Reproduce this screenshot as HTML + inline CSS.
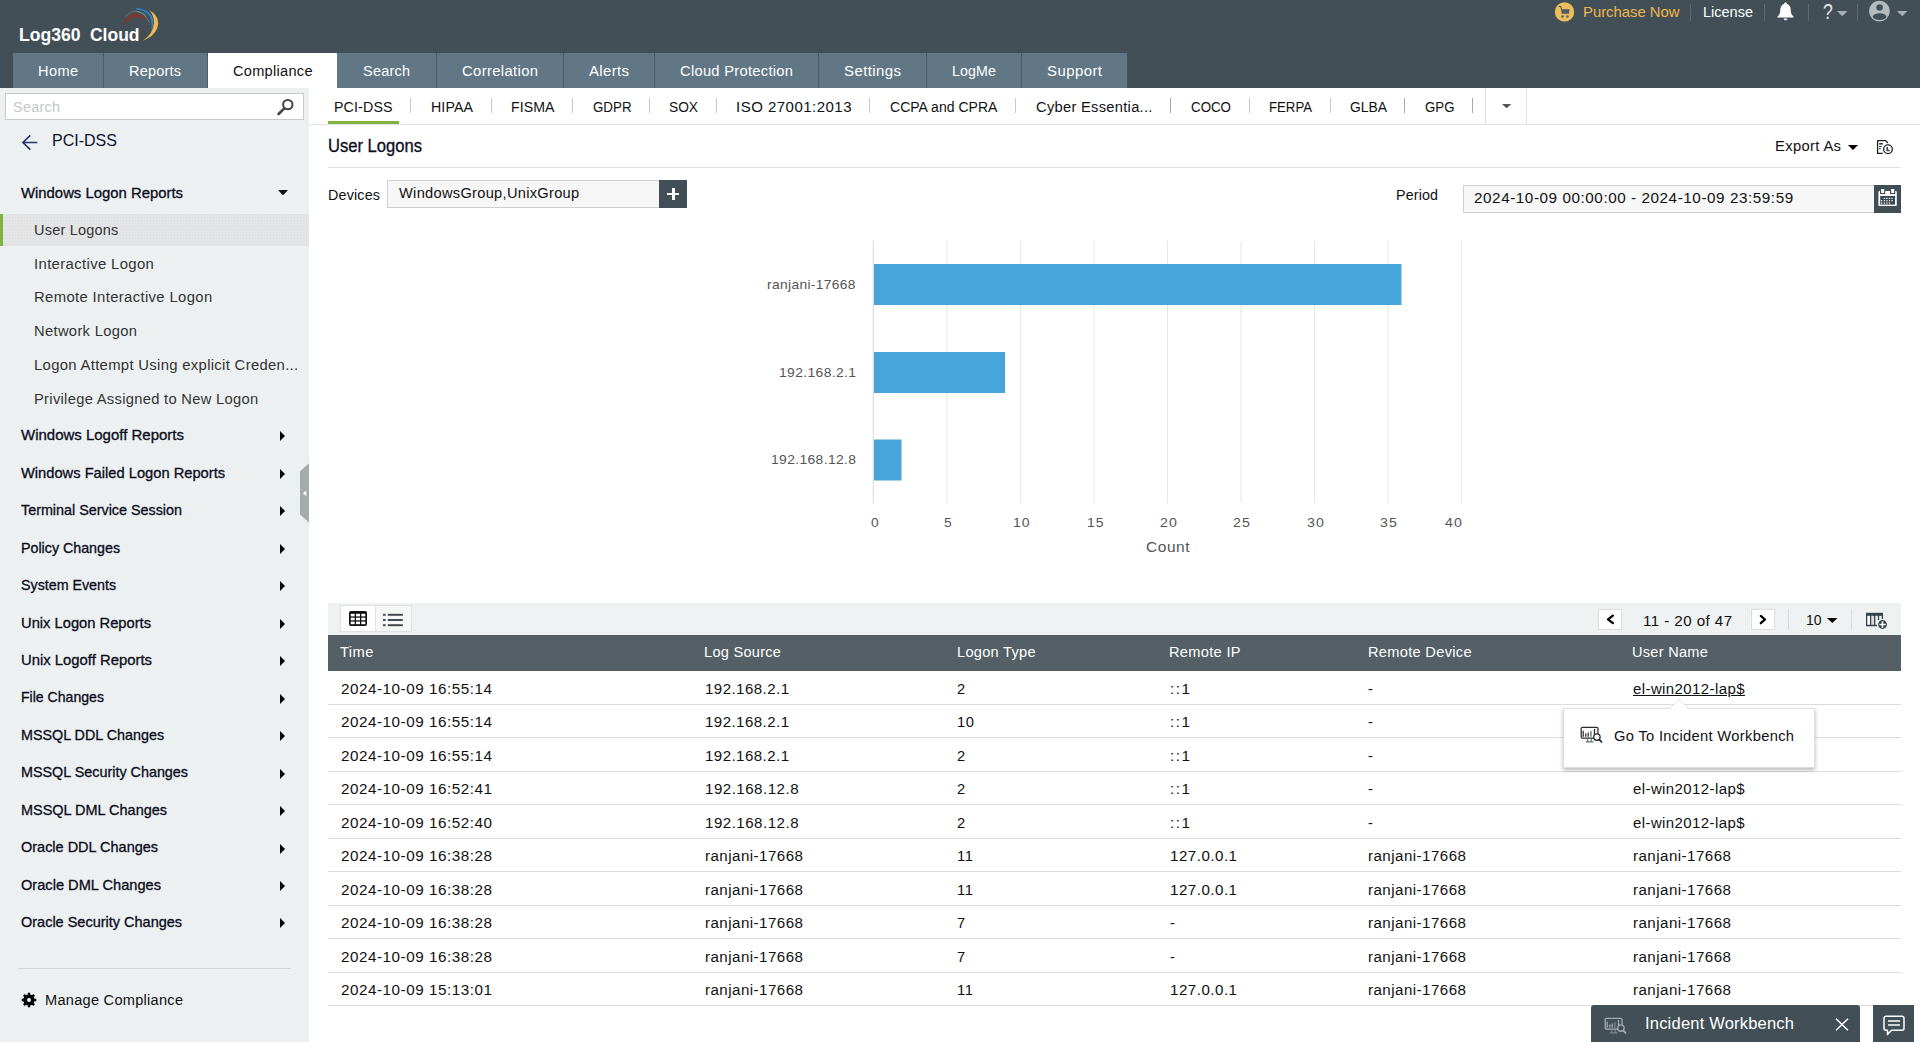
<!DOCTYPE html>
<html><head><meta charset="utf-8"><title>Log360 Cloud</title>
<style>
*{box-sizing:border-box;margin:0;padding:0}
html,body{width:1920px;height:1042px;overflow:hidden;background:#fff}
body{font-family:"Liberation Sans",sans-serif;font-size:14px;color:#222;position:relative}
.a{position:absolute;white-space:pre;line-height:1}
.t{position:absolute;white-space:pre;line-height:16px;height:16px}
/* header */
#hdr{position:absolute;left:0;top:0;width:1920px;height:88px;background:#424f57}
.nt{position:absolute;top:53px;height:35px;background:#627786;color:#fff;font-size:14px;border-right:1px solid #4b5b67}
.nt span{position:absolute;top:10px;line-height:16px;white-space:pre}
.nt.act{background:#fff;color:#111;border-right:none}
.hsep{position:absolute;top:4px;width:1px;height:17px;background:#5d6a72}
/* sidebar */
#side{position:absolute;left:0;top:88px;width:309px;height:954px;background:#ecf0f1}
.mh{position:absolute;left:21px;font-size:15px;font-weight:400;color:#0c0d1c;-webkit-text-stroke:0.32px #0c0d1c;white-space:pre;line-height:18px}
.ms{position:absolute;left:34px;font-size:14px;color:#333;white-space:pre;line-height:16px}
.ar{position:absolute;left:279.800px;width:0;height:0;border-left:5.500px solid #000;border-top:5px solid transparent;border-bottom:5px solid transparent}
/* subtabs */
.st{position:absolute;top:99px;font-size:14px;color:#111;white-space:pre;line-height:16px}
.ss{position:absolute;top:98px;width:1px;height:15px;background:#c9c9c9}
/* table */
.th{position:absolute;top:644px;color:#fff;font-size:14px;white-space:pre;line-height:16px}
.row{position:absolute;left:328px;width:1573px;height:1px;background:#dcdcdc}
.td{position:absolute;font-size:14px;color:#111;white-space:pre;line-height:16px}
</style></head><body>

<!-- ================= HEADER ================= -->
<div id="hdr">
  <span class="a" style="left: 18.5px; top: 26px; font-size: 18px; font-weight: 700; color: rgb(255, 255, 255); transform: scaleX(0.976); transform-origin: 0px 0px;">Log360</span><span class="a" style="left: 89.5px; top: 26px; font-size: 18px; font-weight: 700; color: rgb(255, 255, 255); transform: scaleX(0.971); transform-origin: 0px 0px;">Cloud</span>
  <svg class="a" style="left:116px;top:2px" width="50" height="44" viewBox="116 2 50 44">
    <path d="M123.800 25.200 Q125.800 14 136 13.500 Q143.500 13.800 147.400 21 Q141 17 135 17.200 Q129.500 18 125 24.500Z" fill="#7d392f"></path>
    <path d="M125 16.500 Q130 11.200 136 11 Q144 12 149.500 22.500" fill="none" stroke="#6c7a82" stroke-width="0.900"></path>
    <path d="M136.500 11.400 Q142 12.200 146 16.200" fill="none" stroke="#4aa0d8" stroke-width="1" stroke-dasharray="0.8 0.8"></path>
    <path d="M137.300 11.600 Q142.500 12.600 146.300 16.600" fill="none" stroke="#8cc63f" stroke-width="0.900" stroke-dasharray="0.8 0.8"></path>
    <path d="M136 8 Q146 8.300 151.200 15 Q155.300 22 151 32 Q153 22.500 149.400 16 Q144.500 10 136 9.600Z" fill="#2f7fd0"></path>
    <path d="M149 10 Q158 15 158.200 23 Q157.500 35 142.600 40.900 Q153.200 34 154 23 Q154 15 149 10Z" fill="#f0b84f"></path>
  </svg>
  <!-- nav tabs -->
  <div class="nt" style="left:13px;width:91px"><span style="left: 25px; letter-spacing: 0.38px; transform: scaleX(1.039); transform-origin: 0px 0px;">Home</span></div>
  <div class="nt" style="left:104px;width:104px"><span style="left: 25px; letter-spacing: 0.22px; transform: scaleX(1.033); transform-origin: 0px 0px;">Reports</span></div>
  <div class="nt act" style="left:208px;width:129px"><span style="left: 25px; letter-spacing: 0.27px; transform: scaleX(1.041); transform-origin: 0px 0px;">Compliance</span></div>
  <div class="nt" style="left:337px;width:100px"><span style="left: 26px; letter-spacing: 0.23px; transform: scaleX(1.033); transform-origin: 0px 0px;">Search</span></div>
  <div class="nt" style="left:437px;width:127px"><span style="left: 25px; letter-spacing: 0.32px; transform: scaleX(1.06); transform-origin: 0px 0px;">Correlation</span></div>
  <div class="nt" style="left:564px;width:91px"><span style="left: 25px; letter-spacing: 0.36px; transform: scaleX(1.065); transform-origin: 0px 0px;">Alerts</span></div>
  <div class="nt" style="left:655px;width:164px"><span style="left: 25px; letter-spacing: 0.27px; transform: scaleX(1.05); transform-origin: 0px 0px;">Cloud Protection</span></div>
  <div class="nt" style="left:819px;width:108px"><span style="left: 25px; letter-spacing: 0.39px; transform: scaleX(1.07); transform-origin: 0px 0px;">Settings</span></div>
  <div class="nt" style="left:927px;width:95px"><span style="left: 25px; letter-spacing: 0.13px; transform: scaleX(1.015); transform-origin: 0px 0px;">LogMe</span></div>
  <div class="nt" style="left:1022px;width:105px;border-right:none"><span style="left: 25px; letter-spacing: 0.42px; transform: scaleX(1.067); transform-origin: 0px 0px;">Support</span></div>
  <!-- top right -->
  <svg class="a" style="left:1554px;top:1px" width="22" height="22" viewBox="1554 1 22 22"><circle cx="1564.500" cy="11.900" r="9.700" fill="#ecbd5c"></circle><path d="M1559 6.500H1560.700L1561.800 9.800" fill="none" stroke="#4f5b66" stroke-width="1.100" stroke-linecap="round"></path><path d="M1561.200 9.300H1569.600L1568.900 13.800H1561.700z" fill="#4f5b66"></path><circle cx="1562.500" cy="16.400" r="1.250" fill="#4f5b66"></circle><circle cx="1567.500" cy="16.400" r="1.250" fill="#4f5b66"></circle></svg>
  <span class="t" style="left: 1583px; top: 4px; font-size: 15px; color: rgb(240, 182, 75); transform: scaleX(0.99); transform-origin: 0px 0px;">Purchase Now</span>
  <div class="hsep" style="left:1690px"></div>
  <span class="t" style="left: 1703px; top: 4px; font-size: 15px; color: rgb(255, 255, 255); transform: scaleX(0.967); transform-origin: 0px 0px;">License</span>
  <div class="hsep" style="left:1764px"></div>
  <svg class="a" style="left:1776px;top:2px" width="19" height="19" viewBox="0 0 19 19"><path d="M9.5 0.5c0.9 0 1.4 0.6 1.4 1.4 2.6 0.8 3.8 3 3.8 5.6 0 3.6 0.9 5.4 2.8 7v0.9H1.5v-0.9c1.9-1.6 2.8-3.4 2.8-7 0-2.6 1.2-4.8 3.8-5.6 0-0.8 0.5-1.4 1.4-1.4z" fill="#fff"></path><path d="M7.7 16.4h3.6c0 1-0.8 1.8-1.8 1.8s-1.8-0.8-1.8-1.8z" fill="#fff"></path></svg>
  <div class="hsep" style="left:1808px"></div>
  <span class="a" style="left: 1823px; top: 1.8px; font-size: 21.5px; color: rgb(227, 230, 231); transform: scaleX(0.819); transform-origin: 0px 0px;">?</span>
  <svg class="a" style="left:1836.8px;top:10.9px" width="10.5" height="5.2" viewBox="0 0 10.5 5.2"><path d="M0 0H10.5L5.25 5.2z" fill="#a9b1b6"></path></svg>
  <div class="hsep" style="left:1857px"></div>
  <svg class="a" style="left:1868px;top:0px" width="23" height="23" viewBox="1868 0 23 23"><defs><clipPath id="avc"><circle cx="1879.400" cy="11.100" r="10.400"></circle></clipPath></defs><circle cx="1879.400" cy="11.100" r="10.400" fill="#b3bbbf"></circle><circle cx="1879.600" cy="7.500" r="3.300" fill="#424f57"></circle><ellipse cx="1879.600" cy="16.700" rx="6.800" ry="3.400" fill="#424f57" clip-path="url(#avc)"></ellipse></svg>
  <svg class="a" style="left:1896.8px;top:10.9px" width="10.5" height="5.2" viewBox="0 0 10.5 5.2"><path d="M0 0H10.5L5.25 5.2z" fill="#a9b1b6"></path></svg>
</div>

<!-- ================= SIDEBAR ================= -->
<div id="side"></div>
<div class="a" style="left:5px;top:93px;width:299px;height:27px;background:#fff;border:1px solid #c9c9c9"></div>
<span class="t" style="left: 13px; top: 99px; color: rgb(195, 199, 201); font-size: 14px; letter-spacing: 0.23px; transform: scaleX(1.033); transform-origin: 0px 0px;">Search</span>
<svg class="a" style="left:277px;top:98px" width="18" height="18" viewBox="0 0 18 18"><circle cx="10.800" cy="6.600" r="4.700" fill="none" stroke="#444" stroke-width="2"></circle><path d="M7.300 10.300L1.600 16" stroke="#444" stroke-width="2.600" stroke-linecap="round"></path></svg>

<svg class="a" style="left:21px;top:134px" width="18" height="17" viewBox="0 0 18 17"><path d="M16.300 8.500H1.800M9.300 1.300L1.900 8.500L9.300 15.700" fill="none" stroke="#2a3370" stroke-width="1.650" stroke-linejoin="miter"></path></svg>
<span class="a" style="left: 52px; top: 132px; font-size: 17px; color: rgb(14, 18, 48); line-height: 18px; transform: scaleX(0.942); transform-origin: 0px 0px;">PCI-DSS</span>

<span class="mh" style="top: 184px; transform: scaleX(0.991); transform-origin: 0px 0px;">Windows Logon Reports</span>
<svg class="a" style="left:277.5px;top:189.7px" width="10" height="5.3" viewBox="0 0 10 5.3"><path d="M0 0H10L5.0 5.3z" fill="#111"></path></svg>

<div class="a" style="left:0;top:214px;width:309px;height:32px;background:conic-gradient(from 0deg at 1px 1px,transparent 75%,#dadcdd 0) 0 0/3px 3px,#e2e4e5"></div>
<div class="a" style="left:0;top:214px;width:3px;height:32px;background:#7fb441"></div>
<span class="ms" style="top: 222px; letter-spacing: 0.21px; transform: scaleX(1.034); transform-origin: 0px 0px;">User Logons</span>
<span class="ms" style="top: 256px; letter-spacing: 0.33px; transform: scaleX(1.064); transform-origin: 0px 0px;">Interactive Logon</span>
<span class="ms" style="top: 289px; letter-spacing: 0.33px; transform: scaleX(1.061); transform-origin: 0px 0px;">Remote Interactive Logon</span>
<span class="ms" style="top: 323px; letter-spacing: 0.31px; transform: scaleX(1.052); transform-origin: 0px 0px;">Network Logon</span>
<span class="ms" style="top: 357px; letter-spacing: 0.3px; transform: scaleX(1.06); transform-origin: 0px 0px;">Logon Attempt Using explicit Creden...</span>
<span class="ms" style="top: 391px; letter-spacing: 0.28px; transform: scaleX(1.052); transform-origin: 0px 0px;">Privilege Assigned to New Logon</span>

<span class="mh" style="top: 426.2px; transform: scaleX(0.999); transform-origin: 0px 0px;">Windows Logoff Reports</span><div class="ar" style="top:431.4px"></div>
<span class="mh" style="top: 463.7px; transform: scaleX(0.979); transform-origin: 0px 0px;">Windows Failed Logon Reports</span><div class="ar" style="top:468.9px"></div>
<span class="mh" style="top: 501.1px; transform: scaleX(0.956); transform-origin: 0px 0px;">Terminal Service Session</span><div class="ar" style="top:506.3px"></div>
<span class="mh" style="top: 538.6px; transform: scaleX(0.95); transform-origin: 0px 0px;">Policy Changes</span><div class="ar" style="top:543.8px"></div>
<span class="mh" style="top: 576px; transform: scaleX(0.95); transform-origin: 0px 0px;">System Events</span><div class="ar" style="top:581.2px"></div>
<span class="mh" style="top: 613.5px; transform: scaleX(0.981); transform-origin: 0px 0px;">Unix Logon Reports</span><div class="ar" style="top:618.7px"></div>
<span class="mh" style="top: 651px; transform: scaleX(0.99); transform-origin: 0px 0px;">Unix Logoff Reports</span><div class="ar" style="top:656.2px"></div>
<span class="mh" style="top: 688.4px; transform: scaleX(0.939); transform-origin: 0px 0px;">File Changes</span><div class="ar" style="top:693.6px"></div>
<span class="mh" style="top: 725.9px; transform: scaleX(0.955); transform-origin: 0px 0px;">MSSQL DDL Changes</span><div class="ar" style="top:731.1px"></div>
<span class="mh" style="top: 763.3px; transform: scaleX(0.957); transform-origin: 0px 0px;">MSSQL Security Changes</span><div class="ar" style="top:768.5px"></div>
<span class="mh" style="top: 800.8px; transform: scaleX(0.964); transform-origin: 0px 0px;">MSSQL DML Changes</span><div class="ar" style="top:806.0px"></div>
<span class="mh" style="top: 838.3px; transform: scaleX(0.965); transform-origin: 0px 0px;">Oracle DDL Changes</span><div class="ar" style="top:843.5px"></div>
<span class="mh" style="top: 875.7px; transform: scaleX(0.974); transform-origin: 0px 0px;">Oracle DML Changes</span><div class="ar" style="top:880.9px"></div>
<span class="mh" style="top: 913.2px; transform: scaleX(0.966); transform-origin: 0px 0px;">Oracle Security Changes</span><div class="ar" style="top:918.4px"></div>

<div class="a" style="left:18px;top:968px;width:273px;height:1px;background:#d0d4d5"></div>
<svg class="a" style="left:21px;top:992px" width="16" height="16" viewBox="0 0 16 16"><path d="M13.57 6.78 L15.26 6.85 L15.26 9.15 L13.57 9.22 L12.80 11.07 L13.95 12.32 L12.32 13.95 L11.07 12.80 L9.22 13.57 L9.15 15.26 L6.85 15.26 L6.78 13.57 L4.93 12.80 L3.68 13.95 L2.05 12.32 L3.20 11.07 L2.43 9.22 L0.74 9.15 L0.74 6.85 L2.43 6.78 L3.20 4.93 L2.05 3.68 L3.68 2.05 L4.93 3.20 L6.78 2.43 L6.85 0.74 L9.15 0.74 L9.22 2.43 L11.07 3.20 L12.32 2.05 L13.95 3.68 L12.80 4.93Z" fill="#000"></path><circle cx="8" cy="8" r="2.050" fill="#ecf0f1"></circle></svg>
<span class="t" style="left: 45px; top: 992px; font-size: 14px; color: rgb(17, 17, 17); letter-spacing: 0.26px; transform: scaleX(1.041); transform-origin: 0px 0px;">Manage Compliance</span>

<!-- collapse handle -->
<svg class="a" style="left:300px;top:463px" width="9" height="60" viewBox="0 0 9 60"><path d="M9 0.200L0 8.300V51.500L9 59.600z" fill="#a5acaf"></path><path d="M2.800 30.200L6.300 27.500V33z" fill="#fff"></path></svg>

<!-- ================= SUBTABS ================= -->
<div class="a" style="left:309px;top:124px;width:1611px;height:1px;background:#e4e4e4"></div>
<div class="a" style="left:328px;top:121px;width:71px;height:3px;background:#7fb441"></div>


<span class="st" style="left: 334px; letter-spacing: 0.13px; transform: scaleX(1.016); transform-origin: 0px 0px;">PCI-DSS</span><div class="ss" style="left:410px"></div>
<span class="st" style="left: 431px; letter-spacing: 0.11px; transform: scaleX(1.014); transform-origin: 0px 0px;">HIPAA</span><div class="ss" style="left:491px"></div>
<span class="st" style="left: 511px; letter-spacing: 0.08px; transform: scaleX(1.009); transform-origin: 0px 0px;">FISMA</span><div class="ss" style="left:572px"></div>
<span class="st" style="left: 592.5px; transform: scaleX(0.952); transform-origin: 0px 0px;">GDPR</span><div class="ss" style="left:649px"></div>
<span class="st" style="left: 669px; transform: scaleX(0.98); transform-origin: 0px 0px;">SOX</span><div class="ss" style="left:716px"></div>
<span class="st" style="left: 736px; letter-spacing: 0.44px; transform: scaleX(1.073); transform-origin: 0px 0px;">ISO 27001:2013</span><div class="ss" style="left:869px"></div>
<span class="st" style="left: 889.5px; letter-spacing: 0.01px; transform: scaleX(1.002); transform-origin: 0px 0px;">CCPA and CPRA</span><div class="ss" style="left:1015px"></div>
<span class="st" style="left: 1035.5px; letter-spacing: 0.26px; transform: scaleX(1.051); transform-origin: 0px 0px;">Cyber Essentia...</span><div class="ss" style="left:1170px;background:#aaa"></div>
<span class="st" style="left: 1190.5px; transform: scaleX(0.952); transform-origin: 0px 0px;">COCO</span><div class="ss" style="left:1249px"></div>
<span class="st" style="left: 1269px; transform: scaleX(0.942); transform-origin: 0px 0px;">FERPA</span><div class="ss" style="left:1330px"></div>
<span class="st" style="left: 1350px; transform: scaleX(0.99); transform-origin: 0px 0px;">GLBA</span><div class="ss" style="left:1404px;background:#aaa"></div>
<span class="st" style="left: 1424.5px; transform: scaleX(0.948); transform-origin: 0px 0px;">GPG</span><div class="ss" style="left:1472px;background:#aaa"></div>
<div class="a" style="left:1485px;top:88px;width:1px;height:36px;background:#e2e2e2"></div>
<div class="a" style="left:1526px;top:88px;width:1px;height:36px;background:#e2e2e2"></div>
<svg class="a" style="left:1501.6px;top:103.7px" width="9.2" height="4.3" viewBox="0 0 9.2 4.3"><path d="M0 0H9.2L4.6 4.3z" fill="#555"></path></svg>

<span class="a" style="left: 328.3px; top: 136.8px; font-size: 17.5px; line-height: 18px; color: rgb(11, 12, 28); -webkit-text-stroke: 0.3px rgb(11, 12, 28); transform: scaleX(0.947); transform-origin: 0px 0px;">User Logons</span>
<span class="t" style="left: 1774.5px; top: 138px; font-size: 14px; color: rgb(17, 17, 17); letter-spacing: 0.32px; transform: scaleX(1.056); transform-origin: 0px 0px;">Export As</span>
<svg class="a" style="left:1848px;top:144.9px" width="10" height="5.1" viewBox="0 0 10 5.1"><path d="M0 0H10L5.0 5.1z" fill="#000"></path></svg>
<svg class="a" style="left:1875px;top:138px" width="20" height="18" viewBox="1875 138 20 18"><path d="M1882.800 153.400H1877.600V140.600H1885.600L1888 143" fill="none" stroke="#222" stroke-width="1.300"></path><path d="M1879.200 143.800h3.600" stroke="#333" stroke-width="1.600"></path><path d="M1879.200 146.400h2.400" stroke="#222" stroke-width="1"></path><path d="M1879.200 148.600h1.300" stroke="#222" stroke-width="1.200"></path><circle cx="1888" cy="149.200" r="4.350" fill="#fff" stroke="#222" stroke-width="1.300"></circle><path d="M1887.200 147v3.400h2.400" fill="none" stroke="#2c3e4c" stroke-width="1.500"></path></svg>
<div class="a" style="left:328px;top:167px;width:1573px;height:1px;background:#e1e1e1"></div>

<span class="t" style="left: 328px; top: 187px; font-size: 14px; color: rgb(17, 17, 17); letter-spacing: 0.16px; transform: scaleX(1.024); transform-origin: 0px 0px;">Devices</span>
<div class="a" style="left:387px;top:180px;width:273px;height:28px;background:#f7f7f7;border:1px solid #cfcfcf"></div>
<span class="t" style="left: 398.5px; top: 185px; font-size: 14px; color: rgb(17, 17, 17); letter-spacing: 0.28px; transform: scaleX(1.045); transform-origin: 0px 0px;">WindowsGroup,UnixGroup</span>
<div class="a" style="left:659px;top:180px;width:28px;height:28px;background:#424e56"></div>
<div class="a" style="left:667px;top:192.800px;width:12px;height:2.600px;background:#fff"></div>
<div class="a" style="left:671.900px;top:188px;width:2.700px;height:12.100px;background:#fff"></div>

<span class="t" style="left: 1396px; top: 187px; font-size: 14px; color: rgb(17, 17, 17); letter-spacing: 0.14px; transform: scaleX(1.021); transform-origin: 0px 0px;">Period</span>
<div class="a" style="left:1463px;top:185px;width:412px;height:28px;background:#f7f7f7;border:1px solid #cfcfcf"></div>
<span class="t" style="left: 1474px; top: 190px; font-size: 14px; color: rgb(17, 17, 17); letter-spacing: 0.51px; transform: scaleX(1.09); transform-origin: 0px 0px;">2024-10-09 00:00:00 - 2024-10-09 23:59:59</span>
<div class="a" style="left:1874px;top:185px;width:27px;height:27.700px;background:#424e56"></div>
<svg class="a" style="left:1876px;top:187px" width="23" height="22" viewBox="1876 187 23 22"><rect x="1878.400" y="191" width="18.400" height="15.100" rx="1" fill="#fff"></rect><rect x="1880" y="188.300" width="5.200" height="5.800" fill="#424e56"></rect><rect x="1890" y="188.300" width="5.200" height="5.800" fill="#424e56"></rect><path d="M1881 189H1884.300L1884 193H1881.300zM1891 189H1894.300L1894 193H1891.300z" fill="#fff"></path><rect x="1880.200" y="196" width="14.800" height="8.600" fill="#3a464e"></rect><g fill="#fff"><rect x="1883.75" y="197.80" width="1.300" height="1.200"></rect><rect x="1886.25" y="197.80" width="1.300" height="1.200"></rect><rect x="1888.85" y="197.80" width="1.300" height="1.200"></rect><rect x="1891.45" y="197.80" width="1.300" height="1.200"></rect><rect x="1880.95" y="200.10" width="1.300" height="1.200"></rect><rect x="1883.75" y="200.10" width="1.300" height="1.200"></rect><rect x="1886.25" y="200.10" width="1.300" height="1.200"></rect><rect x="1888.85" y="200.10" width="1.300" height="1.200"></rect><rect x="1891.45" y="200.10" width="1.300" height="1.200"></rect><rect x="1880.95" y="202.50" width="1.300" height="1.200"></rect><rect x="1883.75" y="202.50" width="1.300" height="1.200"></rect><rect x="1886.25" y="202.50" width="1.300" height="1.200"></rect><rect x="1888.85" y="202.50" width="1.300" height="1.200"></rect></g></svg>
<svg class="a" style="left:740px;top:230px" width="760" height="340" viewBox="740 230 760 340">
<rect x="872.80" y="241" width="1" height="262" fill="#d6d6d6"></rect>
<rect x="946.35" y="241" width="1" height="262" fill="#e6e6e6"></rect>
<rect x="1019.90" y="241" width="1" height="262" fill="#e6e6e6"></rect>
<rect x="1093.45" y="241" width="1" height="262" fill="#e6e6e6"></rect>
<rect x="1167.00" y="241" width="1" height="262" fill="#e6e6e6"></rect>
<rect x="1240.55" y="241" width="1" height="262" fill="#e6e6e6"></rect>
<rect x="1314.10" y="241" width="1" height="262" fill="#e6e6e6"></rect>
<rect x="1387.65" y="241" width="1" height="262" fill="#e6e6e6"></rect>
<rect x="1461.20" y="241" width="1" height="262" fill="#e6e6e6"></rect>
<rect x="874" y="264" width="527.500" height="41" fill="#47a5dc"></rect>
<rect x="874" y="352" width="131" height="41" fill="#47a5dc"></rect>
<rect x="874" y="439.500" width="27.500" height="41" fill="#47a5dc"></rect>
</svg>
<span class="t" style="left: 767px; top: 277px; font-size: 13px; color: rgb(85, 85, 85); letter-spacing: 0.32px; transform: scaleX(1.062); transform-origin: 0px 0px;">ranjani-17668</span>
<span class="t" style="left: 778.5px; top: 364.5px; font-size: 13px; color: rgb(85, 85, 85); letter-spacing: 0.35px; transform: scaleX(1.067); transform-origin: 0px 0px;">192.168.2.1</span>
<span class="t" style="left: 770.5px; top: 452px; font-size: 13px; color: rgb(85, 85, 85); letter-spacing: 0.35px; transform: scaleX(1.066); transform-origin: 0px 0px;">192.168.12.8</span>
<span class="t" style="left: 870.5px; top: 514.5px; font-size: 13px; color: rgb(85, 85, 85); letter-spacing: 0.33px; transform: scaleX(1.058); transform-origin: 0px 0px;">0</span>
<span class="t" style="left: 943.5px; top: 514.5px; font-size: 13px; color: rgb(85, 85, 85); letter-spacing: 0.33px; transform: scaleX(1.058); transform-origin: 0px 0px;">5</span>
<span class="t" style="left: 1013px; top: 514.5px; font-size: 13px; color: rgb(85, 85, 85); letter-spacing: 0.85px; transform: scaleX(1.077); transform-origin: 0px 0px;">10</span>
<span class="t" style="left: 1086.5px; top: 514.5px; font-size: 13px; color: rgb(85, 85, 85); letter-spacing: 0.85px; transform: scaleX(1.077); transform-origin: 0px 0px;">15</span>
<span class="t" style="left: 1159.5px; top: 514.5px; font-size: 13px; color: rgb(85, 85, 85); letter-spacing: 1.13px; transform: scaleX(1.09); transform-origin: 0px 0px;">20</span>
<span class="t" style="left: 1233px; top: 514.5px; font-size: 13px; color: rgb(85, 85, 85); letter-spacing: 1.13px; transform: scaleX(1.09); transform-origin: 0px 0px;">25</span>
<span class="t" style="left: 1306.5px; top: 514.5px; font-size: 13px; color: rgb(85, 85, 85); letter-spacing: 1.13px; transform: scaleX(1.09); transform-origin: 0px 0px;">30</span>
<span class="t" style="left: 1380px; top: 514.5px; font-size: 13px; color: rgb(85, 85, 85); letter-spacing: 1.13px; transform: scaleX(1.09); transform-origin: 0px 0px;">35</span>
<span class="t" style="left: 1444.5px; top: 514.5px; font-size: 13px; color: rgb(85, 85, 85); letter-spacing: 1.13px; transform: scaleX(1.09); transform-origin: 0px 0px;">40</span>
<span class="t" style="left: 1146px; top: 539px; font-size: 14.5px; color: rgb(85, 85, 85); letter-spacing: 0.51px; transform: scaleX(1.068); transform-origin: 0px 0px;">Count</span>

<div class="a" style="left:328px;top:603px;width:1573px;height:32px;background:conic-gradient(from 0deg at 1px 1px,transparent 75%,#f5f5f3 0) 0 0/2px 2px,#ecf0f1"></div>
<div class="a" style="left:340px;top:605px;width:72px;height:27px;background:#f7f7f7;border:1px solid #e0e0e0"></div>
<div class="a" style="left:341px;top:606px;width:35px;height:25px;background:#fff;border-right:1px solid #e3e3e3"></div>
<svg class="a" style="left:349px;top:611px" width="18" height="15" viewBox="0 0 18 15"><rect x="0" y="0" width="18" height="15" rx="2" fill="#111"></rect><g fill="#fff"><rect x="1.700" y="2.800" width="4" height="2.600"></rect><rect x="7" y="2.800" width="4" height="2.600"></rect><rect x="12.300" y="2.800" width="4" height="2.600"></rect><rect x="1.700" y="6.700" width="4" height="2.600"></rect><rect x="7" y="6.700" width="4" height="2.600"></rect><rect x="12.300" y="6.700" width="4" height="2.600"></rect><rect x="1.700" y="10.600" width="4" height="2.600"></rect><rect x="7" y="10.600" width="4" height="2.600"></rect><rect x="12.300" y="10.600" width="4" height="2.600"></rect></g></svg>
<svg class="a" style="left:383px;top:613px" width="20" height="14" viewBox="0 0 20 14"><g fill="#454d53"><rect x="0" y="0.800" width="2.600" height="2"></rect><rect x="4.800" y="0.800" width="15" height="2"></rect><rect x="0" y="6" width="2.600" height="2"></rect><rect x="4.800" y="6" width="15" height="2"></rect><rect x="0" y="11.200" width="2.600" height="2"></rect><rect x="4.800" y="11.200" width="15" height="2"></rect></g></svg>
<div class="a" style="left:1598px;top:609px;width:24px;height:21px;background:#fff;border:1px solid #dedede"></div>
<svg class="a" style="left:1604px;top:612px" width="14" height="15" viewBox="1604 612 14 15"><path d="M1612.900 615.700L1608 619.400 1612.900 623.100" fill="none" stroke="#000" stroke-width="2.300" stroke-linecap="round" stroke-linejoin="round"></path></svg>
<span class="t" style="left: 1643px; top: 613px; font-size: 14px; color: rgb(17, 17, 17); letter-spacing: 0.4px; transform: scaleX(1.081); transform-origin: 0px 0px;">11 - 20 of 47</span>
<div class="a" style="left:1751px;top:609px;width:24px;height:21px;background:#fff;border:1px solid #dedede"></div>
<svg class="a" style="left:1756px;top:612px" width="14" height="15" viewBox="1756 612 14 15"><path d="M1760.800 615.900L1765 619.500 1760.800 623.200" fill="none" stroke="#000" stroke-width="2.300" stroke-linecap="round" stroke-linejoin="round"></path></svg>
<div class="a" style="left:1788px;top:609px;width:1px;height:21px;background:#d5d8d9"></div>
<span class="t" style="left: 1805.5px; top: 611.5px; font-size: 14px; color: rgb(17, 17, 17); transform: scaleX(0.995); transform-origin: 0px 0px;">10</span>
<svg class="a" style="left:1826.600px;top:618px" width="10.600" height="5" viewBox="0 0 10.600 5"><path d="M0 0H10.600L5.300 5z" fill="#000"></path></svg>
<div class="a" style="left:1851px;top:609px;width:1px;height:21px;background:#d5d8d9"></div>
<svg class="a" style="left:1864px;top:611px" width="26" height="20" viewBox="1864 611 26 20"><rect x="1867" y="615" width="3.500" height="10.500" fill="#fff"></rect><rect x="1871" y="615" width="3.500" height="10.500" fill="#dcdcdc"></rect><rect x="1875" y="615" width="7.500" height="10.500" fill="#f3f4f4"></rect><rect x="1866" y="612.800" width="17" height="3" fill="#34414a"></rect><path d="M1866.650 613V626M1870.600 615V626M1874.700 615V626M1878.500 615V620M1882.400 615V619.500M1866 625.500H1877" stroke="#34414a" stroke-width="1.300" fill="none"></path><circle cx="1882.500" cy="624.500" r="5.200" fill="#eef1f1"></circle><circle cx="1882.500" cy="624.500" r="4.400" fill="#34414a"></circle><path d="M1882.500 621.300V627.700M1879.300 624.500H1885.700" stroke="#fff" stroke-width="1.600"></path></svg>
<div class="a" style="left:328px;top:635px;width:1573px;height:36px;background:#545f66"></div>
<span class="th" style="left: 340.3px; letter-spacing: 0.39px; transform: scaleX(1.049); transform-origin: 0px 0px;">Time</span>
<span class="th" style="left: 704.2px; letter-spacing: 0.26px; transform: scaleX(1.041); transform-origin: 0px 0px;">Log Source</span>
<span class="th" style="left: 956.7px; letter-spacing: 0.27px; transform: scaleX(1.042); transform-origin: 0px 0px;">Logon Type</span>
<span class="th" style="left: 1169.2px; letter-spacing: 0.29px; transform: scaleX(1.045); transform-origin: 0px 0px;">Remote IP</span>
<span class="th" style="left: 1367.5px; letter-spacing: 0.28px; transform: scaleX(1.045); transform-origin: 0px 0px;">Remote Device</span>
<span class="th" style="left: 1632.2px; letter-spacing: 0.27px; transform: scaleX(1.039); transform-origin: 0px 0px;">User Name</span>
<span class="td" style="left: 340.8px; top: 680.5px; letter-spacing: 0.48px; transform: scaleX(1.089); transform-origin: 0px 0px;">2024-10-09 16:55:14</span>
<span class="td" style="left: 704.7px; top: 680.5px; letter-spacing: 0.42px; transform: scaleX(1.075); transform-origin: 0px 0px;">192.168.2.1</span>
<span class="td" style="left: 957.2px; top: 680.5px; letter-spacing: 0.3px; transform: scaleX(1.05); transform-origin: 0px 0px;">2</span>
<span class="td" style="left: 1169.7px; top: 680.5px; letter-spacing: 1.39px; transform: scaleX(1.09); transform-origin: 0px 0px;">::1</span>
<span class="td" style="left: 1368px; top: 680.5px; letter-spacing: 0.14px; transform: scaleX(1.039); transform-origin: 0px 0px;">-</span>
<span class="td" style="left: 1632.7px; top: 680.5px; text-decoration: underline; letter-spacing: 0.38px; transform: scaleX(1.071); transform-origin: 0px 0px;">el-win2012-lap$</span>
<div class="row" style="top:704px"></div>
<span class="td" style="left: 340.8px; top: 714px; letter-spacing: 0.48px; transform: scaleX(1.089); transform-origin: 0px 0px;">2024-10-09 16:55:14</span>
<span class="td" style="left: 704.7px; top: 714px; letter-spacing: 0.42px; transform: scaleX(1.075); transform-origin: 0px 0px;">192.168.2.1</span>
<span class="td" style="left: 957.2px; top: 714px; letter-spacing: 0.61px; transform: scaleX(1.05); transform-origin: 0px 0px;">10</span>
<span class="td" style="left: 1169.7px; top: 714px; letter-spacing: 1.39px; transform: scaleX(1.09); transform-origin: 0px 0px;">::1</span>
<span class="td" style="left: 1368px; top: 714px; letter-spacing: 0.14px; transform: scaleX(1.039); transform-origin: 0px 0px;">-</span>
<div class="row" style="top:737px"></div>
<span class="td" style="left: 340.8px; top: 747.5px; letter-spacing: 0.48px; transform: scaleX(1.089); transform-origin: 0px 0px;">2024-10-09 16:55:14</span>
<span class="td" style="left: 704.7px; top: 747.5px; letter-spacing: 0.42px; transform: scaleX(1.075); transform-origin: 0px 0px;">192.168.2.1</span>
<span class="td" style="left: 957.2px; top: 747.5px; letter-spacing: 0.3px; transform: scaleX(1.05); transform-origin: 0px 0px;">2</span>
<span class="td" style="left: 1169.7px; top: 747.5px; letter-spacing: 1.39px; transform: scaleX(1.09); transform-origin: 0px 0px;">::1</span>
<span class="td" style="left: 1368px; top: 747.5px; letter-spacing: 0.14px; transform: scaleX(1.039); transform-origin: 0px 0px;">-</span>
<div class="row" style="top:771px"></div>
<span class="td" style="left: 340.8px; top: 781px; letter-spacing: 0.48px; transform: scaleX(1.089); transform-origin: 0px 0px;">2024-10-09 16:52:41</span>
<span class="td" style="left: 704.7px; top: 781px; letter-spacing: 0.45px; transform: scaleX(1.079); transform-origin: 0px 0px;">192.168.12.8</span>
<span class="td" style="left: 957.2px; top: 781px; letter-spacing: 0.3px; transform: scaleX(1.05); transform-origin: 0px 0px;">2</span>
<span class="td" style="left: 1169.7px; top: 781px; letter-spacing: 1.39px; transform: scaleX(1.09); transform-origin: 0px 0px;">::1</span>
<span class="td" style="left: 1368px; top: 781px; letter-spacing: 0.14px; transform: scaleX(1.039); transform-origin: 0px 0px;">-</span>
<span class="td" style="left: 1632.7px; top: 781px; letter-spacing: 0.38px; transform: scaleX(1.071); transform-origin: 0px 0px;">el-win2012-lap$</span>
<div class="row" style="top:804px"></div>
<span class="td" style="left: 340.8px; top: 814.5px; letter-spacing: 0.48px; transform: scaleX(1.089); transform-origin: 0px 0px;">2024-10-09 16:52:40</span>
<span class="td" style="left: 704.7px; top: 814.5px; letter-spacing: 0.45px; transform: scaleX(1.079); transform-origin: 0px 0px;">192.168.12.8</span>
<span class="td" style="left: 957.2px; top: 814.5px; letter-spacing: 0.3px; transform: scaleX(1.05); transform-origin: 0px 0px;">2</span>
<span class="td" style="left: 1169.7px; top: 814.5px; letter-spacing: 1.39px; transform: scaleX(1.09); transform-origin: 0px 0px;">::1</span>
<span class="td" style="left: 1368px; top: 814.5px; letter-spacing: 0.14px; transform: scaleX(1.039); transform-origin: 0px 0px;">-</span>
<span class="td" style="left: 1632.7px; top: 814.5px; letter-spacing: 0.38px; transform: scaleX(1.071); transform-origin: 0px 0px;">el-win2012-lap$</span>
<div class="row" style="top:838px"></div>
<span class="td" style="left: 340.8px; top: 848px; letter-spacing: 0.48px; transform: scaleX(1.089); transform-origin: 0px 0px;">2024-10-09 16:38:28</span>
<span class="td" style="left: 704.7px; top: 848px; letter-spacing: 0.43px; transform: scaleX(1.079); transform-origin: 0px 0px;">ranjani-17668</span>
<span class="td" style="left: 957.2px; top: 848px; letter-spacing: 0.62px; transform: scaleX(1.055); transform-origin: 0px 0px;">11</span>
<span class="td" style="left: 1169.7px; top: 848px; letter-spacing: 0.45px; transform: scaleX(1.081); transform-origin: 0px 0px;">127.0.0.1</span>
<span class="td" style="left: 1368px; top: 848px; letter-spacing: 0.43px; transform: scaleX(1.079); transform-origin: 0px 0px;">ranjani-17668</span>
<span class="td" style="left: 1632.7px; top: 848px; letter-spacing: 0.43px; transform: scaleX(1.079); transform-origin: 0px 0px;">ranjani-17668</span>
<div class="row" style="top:871px"></div>
<span class="td" style="left: 340.8px; top: 881.5px; letter-spacing: 0.48px; transform: scaleX(1.089); transform-origin: 0px 0px;">2024-10-09 16:38:28</span>
<span class="td" style="left: 704.7px; top: 881.5px; letter-spacing: 0.43px; transform: scaleX(1.079); transform-origin: 0px 0px;">ranjani-17668</span>
<span class="td" style="left: 957.2px; top: 881.5px; letter-spacing: 0.62px; transform: scaleX(1.055); transform-origin: 0px 0px;">11</span>
<span class="td" style="left: 1169.7px; top: 881.5px; letter-spacing: 0.45px; transform: scaleX(1.081); transform-origin: 0px 0px;">127.0.0.1</span>
<span class="td" style="left: 1368px; top: 881.5px; letter-spacing: 0.43px; transform: scaleX(1.079); transform-origin: 0px 0px;">ranjani-17668</span>
<span class="td" style="left: 1632.7px; top: 881.5px; letter-spacing: 0.43px; transform: scaleX(1.079); transform-origin: 0px 0px;">ranjani-17668</span>
<div class="row" style="top:905px"></div>
<span class="td" style="left: 340.8px; top: 915px; letter-spacing: 0.48px; transform: scaleX(1.089); transform-origin: 0px 0px;">2024-10-09 16:38:28</span>
<span class="td" style="left: 704.7px; top: 915px; letter-spacing: 0.43px; transform: scaleX(1.079); transform-origin: 0px 0px;">ranjani-17668</span>
<span class="td" style="left: 957.2px; top: 915px; letter-spacing: 0.3px; transform: scaleX(1.05); transform-origin: 0px 0px;">7</span>
<span class="td" style="left: 1169.7px; top: 915px; letter-spacing: 0.14px; transform: scaleX(1.039); transform-origin: 0px 0px;">-</span>
<span class="td" style="left: 1368px; top: 915px; letter-spacing: 0.43px; transform: scaleX(1.079); transform-origin: 0px 0px;">ranjani-17668</span>
<span class="td" style="left: 1632.7px; top: 915px; letter-spacing: 0.43px; transform: scaleX(1.079); transform-origin: 0px 0px;">ranjani-17668</span>
<div class="row" style="top:938px"></div>
<span class="td" style="left: 340.8px; top: 948.5px; letter-spacing: 0.48px; transform: scaleX(1.089); transform-origin: 0px 0px;">2024-10-09 16:38:28</span>
<span class="td" style="left: 704.7px; top: 948.5px; letter-spacing: 0.43px; transform: scaleX(1.079); transform-origin: 0px 0px;">ranjani-17668</span>
<span class="td" style="left: 957.2px; top: 948.5px; letter-spacing: 0.3px; transform: scaleX(1.05); transform-origin: 0px 0px;">7</span>
<span class="td" style="left: 1169.7px; top: 948.5px; letter-spacing: 0.14px; transform: scaleX(1.039); transform-origin: 0px 0px;">-</span>
<span class="td" style="left: 1368px; top: 948.5px; letter-spacing: 0.43px; transform: scaleX(1.079); transform-origin: 0px 0px;">ranjani-17668</span>
<span class="td" style="left: 1632.7px; top: 948.5px; letter-spacing: 0.43px; transform: scaleX(1.079); transform-origin: 0px 0px;">ranjani-17668</span>
<div class="row" style="top:972px"></div>
<span class="td" style="left: 340.8px; top: 982px; letter-spacing: 0.48px; transform: scaleX(1.089); transform-origin: 0px 0px;">2024-10-09 15:13:01</span>
<span class="td" style="left: 704.7px; top: 982px; letter-spacing: 0.43px; transform: scaleX(1.079); transform-origin: 0px 0px;">ranjani-17668</span>
<span class="td" style="left: 957.2px; top: 982px; letter-spacing: 0.62px; transform: scaleX(1.055); transform-origin: 0px 0px;">11</span>
<span class="td" style="left: 1169.7px; top: 982px; letter-spacing: 0.45px; transform: scaleX(1.081); transform-origin: 0px 0px;">127.0.0.1</span>
<span class="td" style="left: 1368px; top: 982px; letter-spacing: 0.43px; transform: scaleX(1.079); transform-origin: 0px 0px;">ranjani-17668</span>
<span class="td" style="left: 1632.7px; top: 982px; letter-spacing: 0.43px; transform: scaleX(1.079); transform-origin: 0px 0px;">ranjani-17668</span>
<div class="row" style="top:1005px"></div>
<div class="a" style="left:1563px;top:708px;width:252px;height:60px;background:#fff;border:1px solid #dedede;box-shadow:0 2px 4px rgba(0,0,0,0.28)"></div>
<svg class="a" style="left:1668px;top:698px" width="22" height="12" viewBox="0 0 22 12"><path d="M1 11.500L11 1.500 21 11.500z" fill="#fff"></path><path d="M1 11L11 1.200 21 11" fill="none" stroke="#e0e0e0" stroke-width="1"></path></svg>
<svg class="a" style="left:1578.5px;top:724.9px" width="25" height="19" viewBox="1578.500 725.500 25 19"><g transform="translate(0 0)"><rect x="1580.700" y="727.800" width="16.800" height="10.800" rx="1.300" fill="none" stroke="#2b2b2b" stroke-width="1.250"></rect><path d="M1582.700 731.300V737.200M1585.300 734V737.200M1587.700 733V737.200M1594 729.500V735" stroke="#2b2b2b" stroke-width="1.250"></path><path d="M1590.400 731.500V737.200" stroke="#5d7280" stroke-width="1.400"></path><path d="M1587.200 739.200V742M1590.800 739.200V742M1585.300 742.400H1593" stroke="#5d7280" stroke-width="1.100"></path><circle cx="1596.400" cy="737.500" r="3.200" fill="#fff" stroke="#2b2b2b" stroke-width="1.350"></circle><path d="M1598.800 740.100L1601 742.300" stroke="#2b2b2b" stroke-width="1.900" stroke-linecap="round"></path></g></svg>
<span class="t" style="left: 1614px; top: 728px; font-size: 14px; color: rgb(17, 17, 17); letter-spacing: 0.29px; transform: scaleX(1.052); transform-origin: 0px 0px;">Go To Incident Workbench</span>
<div class="a" style="left:1591px;top:1005px;width:269px;height:37px;background:#424f57;border-radius:3px 3px 0 0"></div>
<svg class="a" style="left:1603.0px;top:1015.5px" width="25" height="19" viewBox="1578.500 725.500 25 19"><g transform="translate(0 0)"><rect x="1580.700" y="727.800" width="16.800" height="10.800" rx="1.300" fill="none" stroke="#a3acb1" stroke-width="1.250"></rect><path d="M1582.700 731.300V737.200M1585.300 734V737.200M1587.700 733V737.200M1594 729.500V735" stroke="#a3acb1" stroke-width="1.250"></path><path d="M1590.400 731.500V737.200" stroke="#76838a" stroke-width="1.400"></path><path d="M1587.200 739.200V742M1590.800 739.200V742M1585.300 742.400H1593" stroke="#76838a" stroke-width="1.100"></path><circle cx="1596.400" cy="737.500" r="3.200" fill="#424f57" stroke="#a3acb1" stroke-width="1.350"></circle><path d="M1598.800 740.100L1601 742.300" stroke="#a3acb1" stroke-width="1.900" stroke-linecap="round"></path></g></svg>
<span class="a" style="left: 1644.5px; top: 1015px; font-size: 16px; line-height: 18px; color: rgb(255, 255, 255); letter-spacing: 0.2px; transform: scaleX(1.031); transform-origin: 0px 0px;">Incident Workbench</span>
<svg class="a" style="left:1835px;top:1018px" width="14" height="13" viewBox="0 0 14 13"><path d="M1 0.800L13 12.200M13 0.800L1 12.200" stroke="#fff" stroke-width="1.500"></path></svg>
<div class="a" style="left:1873px;top:1005px;width:41px;height:37px;background:#424f57"></div>
<svg class="a" style="left:1883px;top:1015px" width="22" height="21" viewBox="0 0 22 21"><path d="M3 1.200h16a2 2 0 0 1 2 2v10a2 2 0 0 1-2 2H8.500L4.500 19.500v-4.300H3a2 2 0 0 1-2-2v-10a2 2 0 0 1 2-2z" fill="none" stroke="#fff" stroke-width="1.500" stroke-linejoin="round"></path><path d="M5 6h12M5 10h12" stroke="#fff" stroke-width="1.400"></path></svg>



</body></html>
